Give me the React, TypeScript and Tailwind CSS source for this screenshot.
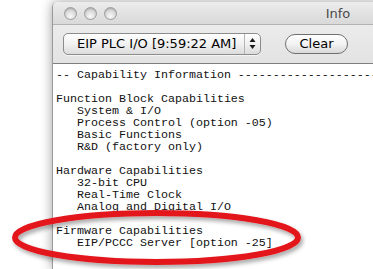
import React from "react";

const lines = [
  "-- Capability Information ----------------------------------------",
  "",
  "Function Block Capabilities",
  "   System & I/O",
  "   Process Control (option -05)",
  "   Basic Functions",
  "   R&D (factory only)",
  "",
  "Hardware Capabilities",
  "   32-bit CPU",
  "   Real-Time Clock",
  "   Analog and Digital I/O",
  "",
  "Firmware Capabilities",
  "   EIP/PCCC Server [option -25]",
];

function Light() {
  return (
    <span className="block w-[13px] h-[13px] rounded-full border border-[#9c9c9c] bg-[radial-gradient(circle_at_50%_75%,#fafafa_0%,#dedede_45%,#bdbdbd_100%)] shadow-[inset_0_1px_1px_rgba(0,0,0,0.15)]" />
  );
}

function PopupArrows() {
  return (
    <svg width="7" height="13" viewBox="0 0 7 13">
      <path d="M3.5 1 L6.5 5 L0.5 5 Z" fill="#1a1a1a" />
      <path d="M0.5 8 L6.5 8 L3.5 12 Z" fill="#1a1a1a" />
    </svg>
  );
}

export default function App() {
  return (
    <div
      className="relative w-[373px] h-[269px] overflow-hidden bg-white"
      style={{ fontFamily: '"Lucida Grande", "DejaVu Sans", sans-serif' }}
    >
      <div className="flex pl-[52px] pt-[2px] h-full">
        {/* window */}
        <div className="flex flex-col w-[571px] shrink-0 rounded-tl-[5px] overflow-hidden border-l border-[#9a9a9a] shadow-[0_0_12px_rgba(0,0,0,0.38)]">
          {/* title bar */}
          <div className="relative flex items-center h-[23px] pl-[11px] gap-[7px] bg-gradient-to-b from-[#ececec] to-[#d9d9d9] border-b border-[#b3b3b3]">
            <Light />
            <Light />
            <Light />
            <span className="absolute inset-x-0 top-[4px] text-center text-[13px] leading-[15px] text-[#4a4a4a]">
              Info
            </span>
          </div>

          {/* toolbar */}
          <div className="flex items-center h-[39px] pl-[10px] pb-[1px] bg-gradient-to-b from-[#ebebeb] to-[#e3e3e3] border-b border-[#7f7f7f]">
            <div className="flex items-center w-[198px] h-[22px] rounded-[5px] border border-[#8c8c8c] bg-gradient-to-b from-[#ffffff] via-[#f1f1f1] to-[#dcdcdc] shadow-[0_1px_0_rgba(255,255,255,0.6)]">
              <span className="flex-1 pl-[13px] text-[13px] leading-[16px] text-black whitespace-nowrap">
                EIP PLC I/O [9:59:22 AM]
              </span>
              <span className="flex items-center justify-center w-[16px] h-full border-l border-[#b5b5b5]">
                <PopupArrows />
              </span>
            </div>
            <div className="ml-[24px] flex items-center justify-center w-[63px] h-[20px] rounded-full border border-[#6f6f6f] bg-gradient-to-b from-[#ffffff] via-[#f3f3f3] to-[#d9d9d9] text-[13px] leading-[16px] text-black">
              Clear
            </div>
          </div>

          {/* text area */}
          <div
            className="flex-1 bg-white pt-[5px] pl-[3px] text-[11.67px] leading-[12px] text-[#111]"
            style={{ fontFamily: '"Liberation Mono", "Courier New", monospace' }}
          >
            {lines.map((l, i) => (
              <div key={i} className="h-[12px] whitespace-pre">
                {l}
              </div>
            ))}
          </div>
        </div>
      </div>

      {/* red marker ellipse */}
      <svg
        className="absolute left-0 top-0 pointer-events-none"
        width="373"
        height="269"
        viewBox="0 0 373 269"
      >
        <defs>
          <filter id="sh" x="-10%" y="-30%" width="120%" height="160%">
            <feDropShadow dx="2" dy="3" stdDeviation="2" floodColor="#000" floodOpacity="0.35" />
          </filter>
        </defs>
        <ellipse
          cx="156.5"
          cy="237.5"
          rx="141.5"
          ry="24.5"
          fill="none"
          stroke="#e3141b"
          strokeWidth="6"
          filter="url(#sh)"
        />
      </svg>
    </div>
  );
}
